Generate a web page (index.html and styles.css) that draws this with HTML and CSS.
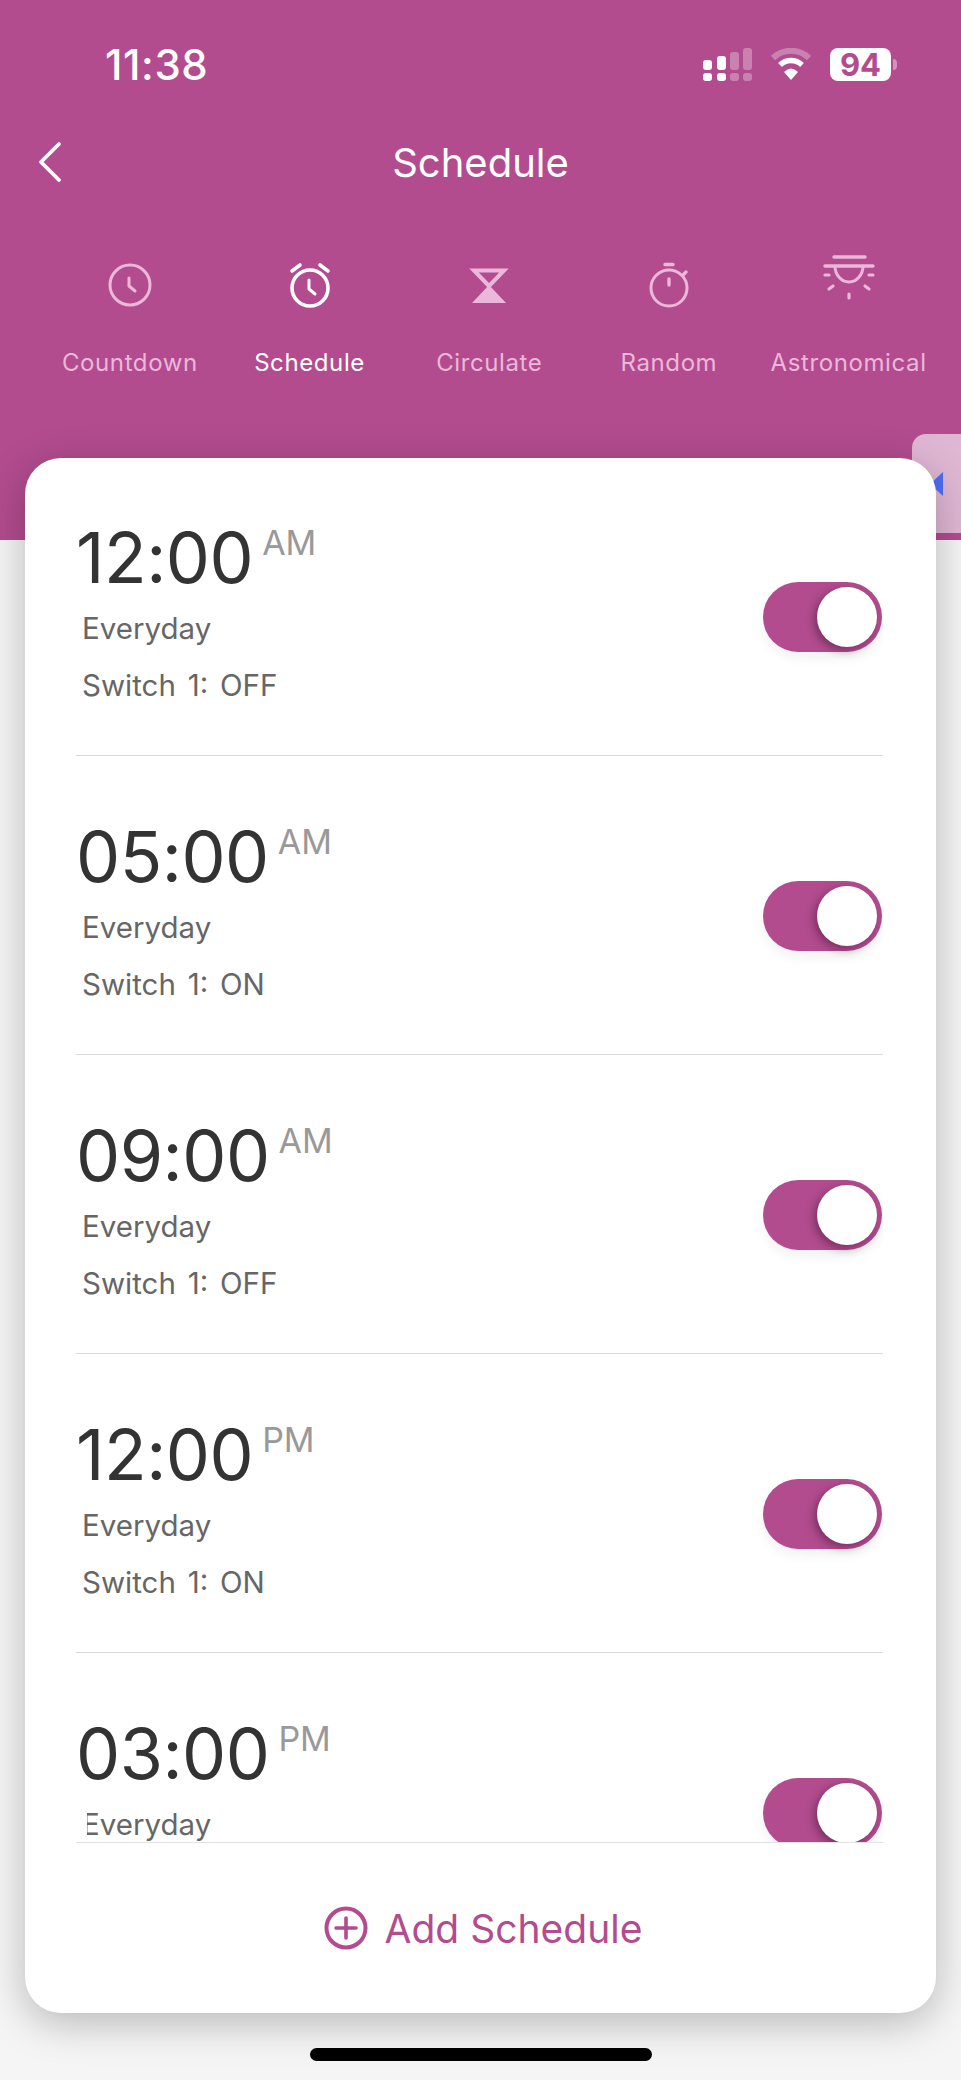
FILE: index.html
```html
<!DOCTYPE html>
<html lang="en">
<head>
  <meta charset="UTF-8">
  <meta name="viewport" content="width=device-width, initial-scale=1">
  <title>Schedule</title>
  <link rel="stylesheet" href="styles.css">
</head>
<body>

  <header class="top">
    <div class="status">
      <span class="status-time">11:38</span>
      <div class="status-icons">
        <svg class="signal" width="49" height="33" viewBox="0 0 49 33">
          <g fill="#fff">
            <rect x="0" y="12" width="9" height="10" rx="3"/>
            <rect x="14" y="8" width="9" height="14" rx="3"/>
            <rect x="0" y="25" width="9" height="8" rx="3"/>
            <rect x="14" y="25" width="9" height="8" rx="3"/>
          </g>
          <g fill="#fff" opacity="0.3">
            <rect x="27" y="4" width="9" height="18" rx="3"/>
            <rect x="40" y="0" width="9" height="22" rx="3"/>
            <rect x="27" y="25" width="9" height="8" rx="3"/>
            <rect x="40" y="25" width="9" height="8" rx="3"/>
          </g>
        </svg>
        <svg class="wifi" width="40" height="32" viewBox="0 0 40 32">
          <path d="M2 10 A26 26 0 0 1 38 10" fill="none" stroke="#fff" stroke-opacity="0.3" stroke-width="6"/>
          <path d="M9 17 A16 16 0 0 1 31 17" fill="none" stroke="#fff" stroke-width="5.5"/>
          <path d="M13 24 Q20 17 27 24 L20 32 Z" fill="#fff"/>
        </svg>
        <div class="battery"><span class="battery-level">94</span><i class="battery-tip"></i></div>
      </div>
    </div>

    <div class="nav">
      <svg class="back" width="26" height="42" viewBox="0 0 26 42">
        <path d="M22 3 L4 21 L22 39" fill="none" stroke="#fff" stroke-width="3.8" stroke-linecap="round" stroke-linejoin="round"/>
      </svg>
      <h1 class="nav-title">Schedule</h1>
    </div>

    <div class="tabs">
      <div class="tab">
        <svg class="tab-icon" width="60" height="60" viewBox="0 0 60 60">
          <circle cx="30" cy="30" r="20" fill="none" stroke="currentColor" stroke-width="3"/>
          <path d="M29 23 V31 L35 36" fill="none" stroke="currentColor" stroke-width="3" stroke-linecap="round" stroke-linejoin="round"/>
        </svg>
        <span>Countdown</span>
      </div>
      <div class="tab active">
        <svg class="tab-icon" width="60" height="60" viewBox="0 0 60 60">
          <circle cx="30" cy="33" r="18" fill="none" stroke="currentColor" stroke-width="3.6"/>
          <path d="M29 25 V34 L35 39" fill="none" stroke="currentColor" stroke-width="3" stroke-linecap="round" stroke-linejoin="round"/>
          <path d="M12 16 L20 10 M48 16 L40 10" fill="none" stroke="currentColor" stroke-width="3.6" stroke-linecap="round"/>
        </svg>
        <span>Schedule</span>
      </div>
      <div class="tab">
        <svg class="tab-icon" width="60" height="60" viewBox="0 0 60 60">
          <path d="M15 15.5 H45 L30 31 Z" fill="none" stroke="currentColor" stroke-width="4"/>
          <path d="M30 30 L47 48 H13 Z" fill="currentColor"/>
        </svg>
        <span>Circulate</span>
      </div>
      <div class="tab">
        <svg class="tab-icon" width="60" height="60" viewBox="0 0 60 60">
          <circle cx="30" cy="33" r="18" fill="none" stroke="currentColor" stroke-width="3"/>
          <path d="M26 9.5 H34 M30 24 V30 M44 20 L47 17" fill="none" stroke="currentColor" stroke-width="3.4" stroke-linecap="round"/>
        </svg>
        <span>Random</span>
      </div>
      <div class="tab">
        <svg class="tab-icon" width="60" height="60" viewBox="0 0 60 60">
          <path d="M15 2 H46 M6 11 H54" fill="none" stroke="currentColor" stroke-width="3.4" stroke-linecap="round"/>
          <path d="M16 11 A14 16 0 0 0 44 11" fill="none" stroke="currentColor" stroke-width="3"/>
          <path d="M6 20 H10 M50 20 H54 M10 34 L14 31 M50 34 L46 31 M30 39 V43" fill="none" stroke="currentColor" stroke-width="3.2" stroke-linecap="round"/>
        </svg>
        <span>Astronomical</span>
      </div>
    </div>
  </header>

  <div class="side-tab"><i class="side-arrow"></i></div>

  <main class="card">
    <div class="list">
      <div class="row">
        <div class="row-text">
          <div class="time">12:00<sup class="period">AM</sup></div>
          <div class="sub">Everyday</div>
          <div class="sub">Switch 1: OFF</div>
        </div>
        <div class="toggle"><i class="knob"></i></div>
      </div>
      <div class="row">
        <div class="row-text">
          <div class="time">05:00<sup class="period">AM</sup></div>
          <div class="sub">Everyday</div>
          <div class="sub">Switch 1: ON</div>
        </div>
        <div class="toggle"><i class="knob"></i></div>
      </div>
      <div class="row">
        <div class="row-text">
          <div class="time">09:00<sup class="period">AM</sup></div>
          <div class="sub">Everyday</div>
          <div class="sub">Switch 1: OFF</div>
        </div>
        <div class="toggle"><i class="knob"></i></div>
      </div>
      <div class="row">
        <div class="row-text">
          <div class="time">12:00<sup class="period">PM</sup></div>
          <div class="sub">Everyday</div>
          <div class="sub">Switch 1: ON</div>
        </div>
        <div class="toggle"><i class="knob"></i></div>
      </div>
      <div class="row">
        <div class="row-text">
          <div class="time">03:00<sup class="period">PM</sup></div>
          <div class="sub">Everyday</div>
        </div>
        <div class="toggle"><i class="knob"></i></div>
      </div>
    </div>

    <div class="add">
      <svg width="44" height="44" viewBox="0 0 44 44">
        <circle cx="22" cy="22" r="19.5" fill="none" stroke="currentColor" stroke-width="4"/>
        <path d="M22 12 V32 M12 22 H32" fill="none" stroke="currentColor" stroke-width="3.6" stroke-linecap="round"/>
      </svg>
      <span>Add Schedule</span>
    </div>
  </main>

  <div class="home-bar"></div>

</body>
</html>
```

FILE: styles.css
```css
:root {
  --brand: #B24C8E;
  --tab-dim: #EBB7DB;
}

html, body {
  margin: 0;
  padding: 0;
}

body {
  position: relative;
  width: 961px;
  height: 2080px;
  overflow: hidden;
  background-color: #F5F5F5;
  font-family: Inter, "Liberation Sans", sans-serif;
}

/* Cabecera */
.top {
  height: 540px;
  box-sizing: border-box;
  background-color: var(--brand);
  color: #fff;
}

.status {
  display: flex;
  justify-content: space-between;
  align-items: center;
  padding: 43px 70px 0 105px;
  height: 42px;
}

.status-time {
  font-size: 42px;
  font-weight: 500;
  letter-spacing: 0.6px;
}

.status-icons {
  display: flex;
  align-items: center;
  gap: 19px;
}

.battery {
  position: relative;
  width: 61px;
  height: 33px;
  border-radius: 8px;
  background-color: #fff;
  display: flex;
  justify-content: center;
  align-items: center;
}

.battery-level {
  color: var(--brand);
  font-size: 31px;
  font-weight: 700;
}

.battery-tip {
  position: absolute;
  right: -6px;
  top: 11px;
  width: 4px;
  height: 11px;
  border-radius: 0 6px 6px 0;
  background-color: rgba(255, 255, 255, 0.4);
}

.nav {
  position: relative;
  display: flex;
  justify-content: center;
  align-items: center;
  height: 60px;
  margin-top: 47px;
}

.back {
  position: absolute;
  left: 37px;
  top: 9px;
}

.nav-title {
  margin: 0;
  font-size: 40px;
  font-weight: 400;
}

.tabs {
  display: grid;
  grid-template-columns: repeat(5, 179.7px);
  padding: 63px 0 0 40px;
}

.tab {
  display: flex;
  flex-direction: column;
  align-items: center;
  color: var(--tab-dim);
  font-size: 24px;
  letter-spacing: 0.6px;
  white-space: nowrap;
}

.tab.active {
  color: #fff;
}

.tab-icon {
  margin-bottom: 33px;
}

/* Pestaña lateral */
.side-tab {
  position: absolute;
  top: 434px;
  left: 912px;
  width: 49px;
  height: 99px;
  border-radius: 14px 0 0 0;
  background-color: #DFB7D3;
}

.side-arrow {
  position: absolute;
  top: 38px;
  left: 18px;
  width: 0;
  height: 0;
  border-top: 12px solid transparent;
  border-bottom: 12px solid transparent;
  border-right: 13px solid #4F6EF7;
}

/* Tarjeta */
.card {
  position: relative;
  margin: -82px 25px 0;
  height: 1555px;
  border-radius: 36px;
  background-color: #fff;
  box-shadow: 0 10px 40px rgba(0, 0, 0, 0.25);
}

.list {
  height: 1384px;
  overflow: hidden;
  margin: 0 53px 0 51px;
  border-bottom: 1px solid #E2E2E2;
}

.row {
  display: flex;
  justify-content: space-between;
  height: 299px;
  box-sizing: border-box;
  padding-right: 1px;
  border-bottom: 1px solid #D9D9D9;
}

.row:first-child {
  height: 298px;
}

.row:first-child .row-text {
  padding-top: 60px;
}

.row:first-child .toggle {
  margin-top: 124px;
}

.row-text {
  padding-top: 61px;
}

.time {
  position: relative;
  height: 80px;
  color: #333;
  font-size: 70px;
  line-height: 80px;
  letter-spacing: -0.5px;
}

.period {
  position: absolute;
  top: 5px;
  margin-left: 9px;
  color: #999;
  font-size: 34px;
  line-height: 40px;
  letter-spacing: 0;
  vertical-align: baseline;
}

.sub {
  position: relative;
  margin: 6px 0 0 6px;
  height: 48px;
  color: #666;
  font-size: 29.5px;
  word-spacing: 3.5px;
  line-height: 48px;
}

.sub + .sub {
  margin-top: 9px;
}

.row:last-child .sub::before {
  content: "";
  position: absolute;
  left: 0;
  top: 8px;
  width: 5px;
  height: 30px;
  background-color: #fff;
}

.toggle {
  position: relative;
  width: 119px;
  height: 70px;
  margin-top: 125px;
  border-radius: 35px;
  background-color: var(--brand);
  box-shadow: 0 6px 12px rgba(0, 0, 0, 0.06);
}

.knob {
  position: absolute;
  top: 5px;
  right: 5px;
  width: 60px;
  height: 60px;
  border-radius: 50%;
  background-color: #fff;
  box-shadow: -3px 3px 8px rgba(70, 20, 55, 0.5);
}

.add {
  display: flex;
  justify-content: center;
  align-items: center;
  gap: 17px;
  height: 170px;
  padding-left: 5px;
  color: var(--brand);
  font-size: 39px;
}

.home-bar {
  position: absolute;
  left: 310px;
  top: 2048px;
  width: 342px;
  height: 13px;
  border-radius: 7px;
  background-color: #000;
}
```
